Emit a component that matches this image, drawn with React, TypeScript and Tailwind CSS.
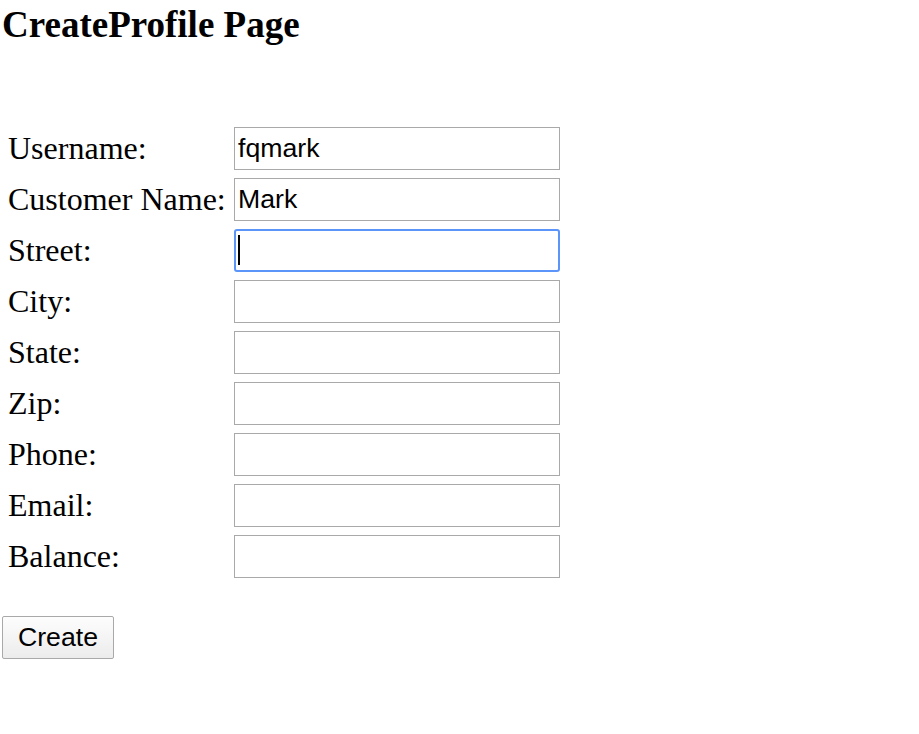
const fields: { label: string; value: string; focused?: boolean }[] = [
  { label: 'Username:', value: 'fqmark' },
  { label: 'Customer Name:', value: 'Mark' },
  { label: 'Street:', value: '', focused: true },
  { label: 'City:', value: '' },
  { label: 'State:', value: '' },
  { label: 'Zip:', value: '' },
  { label: 'Phone:', value: '' },
  { label: 'Email:', value: '' },
  { label: 'Balance:', value: '' },
]

export default function App() {
  return (
    <div className="min-h-screen bg-white text-black font-['Liberation_Serif',serif]">
      <h3 className="pl-[2px] pt-[4px] text-[37px] font-bold leading-[42px]">CreateProfile Page</h3>

      <form className="mt-[81px]" onSubmit={(e) => e.preventDefault()}>
        <div className="flex flex-col gap-[8px] pl-[8px]">
          {fields.map((f) => (
            <div key={f.label} className="flex h-[43px] items-center">
              <label className="w-[226px] text-[32px] leading-[43px] whitespace-nowrap">{f.label}</label>
              <div className="relative">
                <input
                  readOnly
                  value={f.value}
                  className={
                    f.focused
                      ? "box-border h-[43px] w-[326px] rounded-[3px] border-2 border-[#5b95f9] px-[2px] font-['Liberation_Sans',sans-serif] text-[26.67px] outline-none"
                      : "box-border h-[43px] w-[326px] border border-[#a9a9a9] px-[3px] font-['Liberation_Sans',sans-serif] text-[26.67px] outline-none"
                  }
                />
                {f.focused ? (
                  <span className="absolute left-[4px] top-[6px] h-[30px] w-[2px] bg-black" />
                ) : null}
              </div>
            </div>
          ))}
        </div>

        <button
          type="submit"
          className="ml-[2px] mt-[38px] h-[43px] w-[112px] rounded-[2px] border border-[#a9a9a9] bg-gradient-to-b from-[#fdfdfd] to-[#ececec] font-['Liberation_Sans',sans-serif] text-[26.67px] leading-none text-black"
        >
          Create
        </button>
      </form>
    </div>
  )
}
